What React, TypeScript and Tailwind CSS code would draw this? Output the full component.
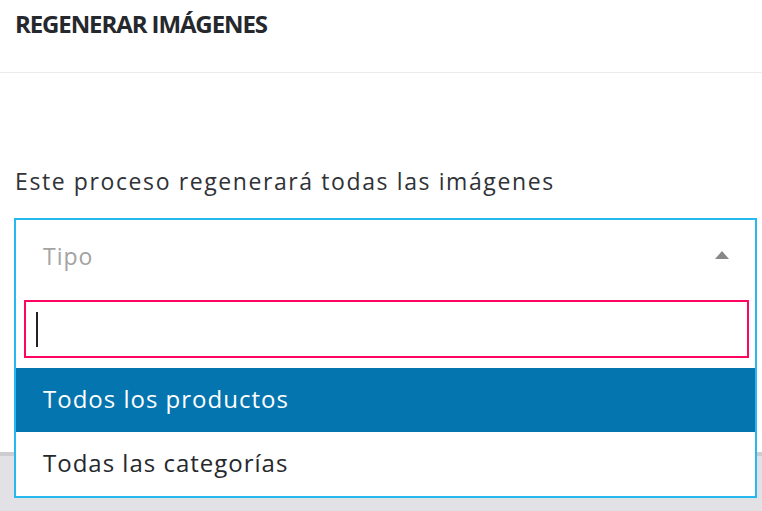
import React from 'react';

const App: React.FC = () => {
  return (
    <div
      className="w-[762px] h-[511px] bg-white flex flex-col overflow-hidden text-[#363a41]"
      style={{ fontFamily: '"Open Sans", "Noto Sans", sans-serif' }}
    >
      <div className="h-[73px] shrink-0 border-b border-[#ebebeb] pl-[15px] pt-[8px]">
        <h2 className="text-[24px] font-bold tracking-[-1.1px] leading-[32px] text-[#25282c]">REGENERAR IMÁGENES</h2>
      </div>

      <div className="flex-1 pl-[14px] pr-[5px] pt-[92px]">
        <p className="text-[23px] tracking-[1.6px] leading-[32px] text-[#2f3237] pl-px">Este proceso regenerará todas las imágenes</p>

        <div className="relative mt-[21px] z-10">
          <div className="h-[80px] border-2 border-b-0 border-[#25b9ef] flex items-center justify-between pl-[27px] pr-[26px] pb-[2px]">
            <span className="text-[23px] tracking-[1px] text-[#a3a3a3] mt-[-4px]">Tipo</span>
            <svg width="14" height="8" viewBox="0 0 14 8" className="mt-[-6px]">
              <polygon points="7,0 14,8 0,8" fill="#888" />
            </svg>
          </div>
          <div className="absolute left-0 right-0 top-full bg-white border-2 border-t-0 border-[#25b9ef]">
            <div className="pl-[8px] pr-[6px] pt-[2px] pb-[10px]">
              <div className="h-[58px] border-2 border-[#ff0561] flex items-center pl-[10px]">
                <span className="block w-[2px] h-[35px] bg-[#222]" />
              </div>
            </div>
            <div className="h-[64px] bg-[#0575b0] text-white flex items-center pl-[27px] text-[24px] tracking-[1px] pb-[3px]">
              Todos los productos
            </div>
            <div className="h-[64px] bg-white text-[#25282c] flex items-center pl-[27px] text-[24px] tracking-[1px] pb-[3px]">
              Todas las categorías
            </div>
          </div>
        </div>
      </div>

      <div className="h-[59px] shrink-0 bg-[#e2e2e6] border-t-4 border-[#cdcdd1]" />
    </div>
  );
};

export default App;
